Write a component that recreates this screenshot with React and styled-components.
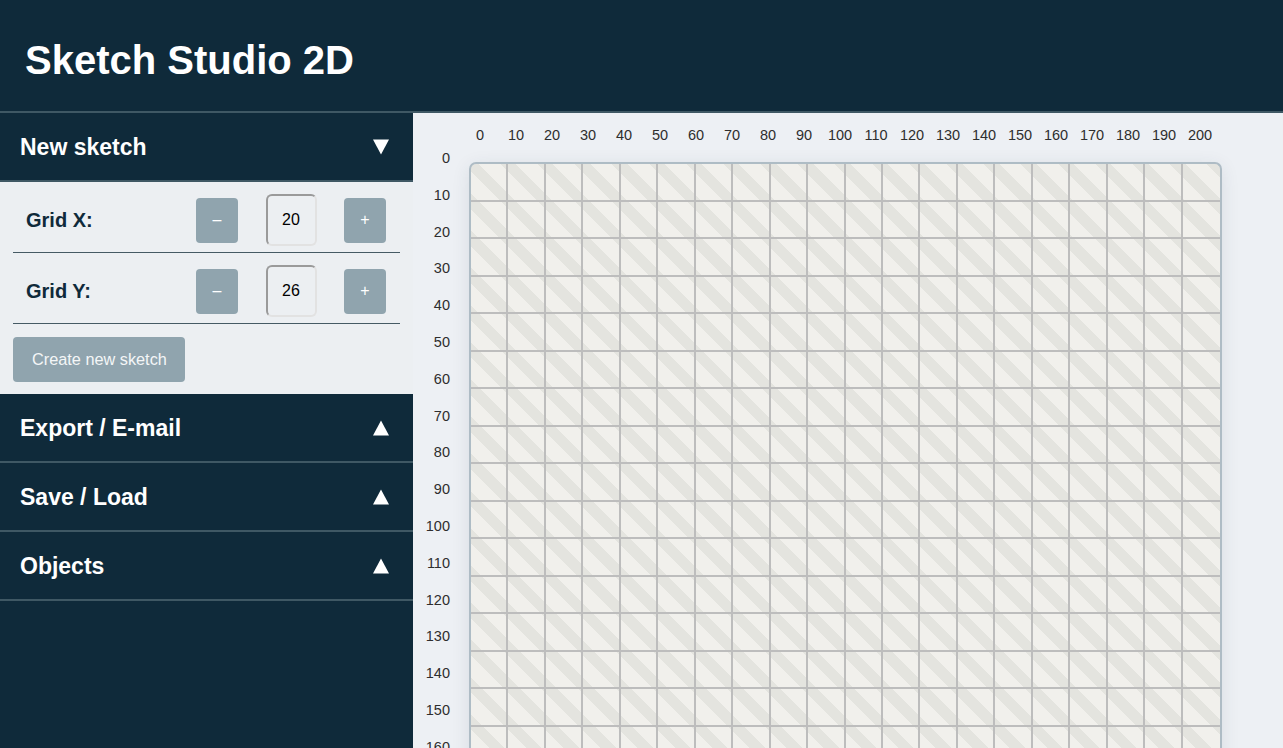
import React from "react";
import styled, { createGlobalStyle } from "styled-components";

const Global = createGlobalStyle`
  html, body { margin: 0; padding: 0; height: 100%; }
  body {
    font-family: "Liberation Sans", Arial, sans-serif;
    overflow: hidden;
  }
  #root { height: 100%; }
  * { box-sizing: border-box; }
`;

const Shell = styled.div`
  display: flex;
  flex-direction: column;
  height: 100vh;
  overflow: hidden;
`;

const TopBar = styled.header`
  flex-shrink: 0;
  height: 113px;
  background: #0f2a3a;
  border-bottom: 2px solid #3f5864;
  padding: 37px 25px 0;
`;

const Title = styled.h1`
  margin: 0;
  font-size: 40px;
  line-height: 46px;
  font-weight: 700;
  color: #ffffff;
`;

const Body = styled.div`
  flex: 1;
  display: flex;
  min-height: 0;
`;

const Sidebar = styled.aside`
  width: 413px;
  flex-shrink: 0;
  background: #0f2a3a;
  overflow: hidden;
`;

const SectionHeader = styled.div`
  height: 69px;
  display: flex;
  align-items: center;
  justify-content: space-between;
  padding: 1px 24px 0 20px;
  border-bottom: 2px solid #3f5864;
  color: #ffffff;
  font-size: 23px;
  font-weight: 700;
  cursor: pointer;
`;

const Triangle = ({ up }) => (
  <svg width="16" height="16" viewBox="0 0 16 16">
    {up ? (
      <polygon points="8,0.5 16,15.5 0,15.5" fill="#ffffff" />
    ) : (
      <polygon points="0,0.5 16,0.5 8,15.5" fill="#ffffff" />
    )}
  </svg>
);

const Panel = styled.div`
  background: #eceff2;
  padding: 0 13px 12px;
`;

const FieldRow = styled.div`
  display: flex;
  align-items: center;
  padding: 12px 14px 6px 13px;
  border-bottom: 1px solid #455a64;
`;

const FieldLabel = styled.label`
  flex: 1;
  font-size: 20px;
  font-weight: 700;
  color: #0f2a3a;
  margin-top: 1px;
`;

const Controls = styled.div`
  display: flex;
  align-items: center;
  gap: 27.5px;
`;

const StepButton = styled.button`
  width: 42px;
  height: 45px;
  border: none;
  border-radius: 4px;
  background: #90a4ae;
  color: #ffffff;
  font-family: "Liberation Sans", Arial, sans-serif;
  font-size: 16px;
  padding: 0;
  cursor: pointer;
`;

const NumberBox = styled.input`
  width: 51px;
  height: 52px;
  border-width: 2px;
  border-style: solid;
  border-color: #9a9a9a #e2e2e2 #e2e2e2 #9a9a9a;
  border-radius: 6px;
  background: transparent;
  text-align: center;
  font-family: "Liberation Sans", Arial, sans-serif;
  font-size: 16px;
  color: #000000;
  padding: 0;
  outline: none;
`;

const CreateButton = styled.button`
  margin-top: 13px;
  height: 45px;
  padding: 0 18px 0 19px;
  border: none;
  border-radius: 4px;
  background: #90a4ae;
  color: #f4f6f7;
  font-family: "Liberation Sans", Arial, sans-serif;
  font-size: 16.3px;
  cursor: pointer;
`;

const Main = styled.main`
  flex: 1;
  background: #edf0f4;
  overflow: hidden;
  padding-top: 14px;
`;

const ColLabels = styled.div`
  display: flex;
  margin-left: 49px;
  height: 17px;
`;

const ColLabel = styled.span`
  width: 36px;
  flex-shrink: 0;
  text-align: center;
  font-size: 14.5px;
  line-height: 17px;
  color: #2e2e2e;
`;

const Board = styled.div`
  display: flex;
  align-items: flex-start;
  margin-top: -4px;
`;

const RowLabels = styled.div`
  width: 37px;
  flex-shrink: 0;
  display: flex;
  flex-direction: column;
`;

const RowLabel = styled.span`
  height: 36.8px;
  line-height: 36.8px;
  text-align: right;
  font-size: 14.5px;
  color: #2e2e2e;
`;

const GridFrame = styled.div`
  flex-shrink: 0;
  margin-left: 19px;
  margin-top: 22px;
  width: 753px;
  border: 2px solid #aebcc5;
  border-bottom: none;
  border-radius: 7px 7px 0 0;
  overflow: hidden;
  box-shadow: 0 4px 18px rgba(40, 60, 80, 0.1);
  display: grid;
  grid-template-columns: repeat(${(p) => p.cols}, 1fr);
  background-color: #f1f0ec;
  background-image: repeating-linear-gradient(
    45deg,
    #e4e4df 0px,
    #e4e4df 11px,
    #f1f0ec 11px,
    #f1f0ec 26.3px
  );
`;

const Cell = styled.div`
  height: 37.5px;
  border-right: 2px solid #bdbdbd;
  border-bottom: 2px solid #bdbdbd;
  &:nth-child(${(p) => p.cols}n) {
    border-right: none;
  }
`;

const COLS = 20;
const ROWS = 26;

const Field = ({ label, value }) => (
  <FieldRow>
    <FieldLabel>{label}</FieldLabel>
    <Controls>
      <StepButton>–</StepButton>
      <NumberBox defaultValue={value} />
      <StepButton>+</StepButton>
    </Controls>
  </FieldRow>
);

export default function App() {
  const colLabels = Array.from({ length: COLS + 1 }, (_, i) => i * 10);
  const rowLabels = Array.from({ length: ROWS + 1 }, (_, i) => i * 10);
  const cells = Array.from({ length: COLS * ROWS }, (_, i) => i);

  return (
    <>
      <Global />
      <Shell>
        <TopBar>
          <Title>Sketch Studio 2D</Title>
        </TopBar>
        <Body>
          <Sidebar>
            <SectionHeader>
              <span>New sketch</span>
              <Triangle />
            </SectionHeader>
            <Panel>
              <Field label="Grid X:" value="20" />
              <Field label="Grid Y:" value="26" />
              <CreateButton>Create new sketch</CreateButton>
            </Panel>
            <SectionHeader>
              <span>Export / E-mail</span>
              <Triangle up />
            </SectionHeader>
            <SectionHeader>
              <span>Save / Load</span>
              <Triangle up />
            </SectionHeader>
            <SectionHeader>
              <span>Objects</span>
              <Triangle up />
            </SectionHeader>
          </Sidebar>
          <Main>
            <ColLabels>
              {colLabels.map((n) => (
                <ColLabel key={n}>{n}</ColLabel>
              ))}
            </ColLabels>
            <Board>
              <RowLabels>
                {rowLabels.map((n) => (
                  <RowLabel key={n}>{n}</RowLabel>
                ))}
              </RowLabels>
              <GridFrame cols={COLS}>
                {cells.map((i) => (
                  <Cell key={i} cols={COLS} />
                ))}
              </GridFrame>
            </Board>
          </Main>
        </Body>
      </Shell>
    </>
  );
}
